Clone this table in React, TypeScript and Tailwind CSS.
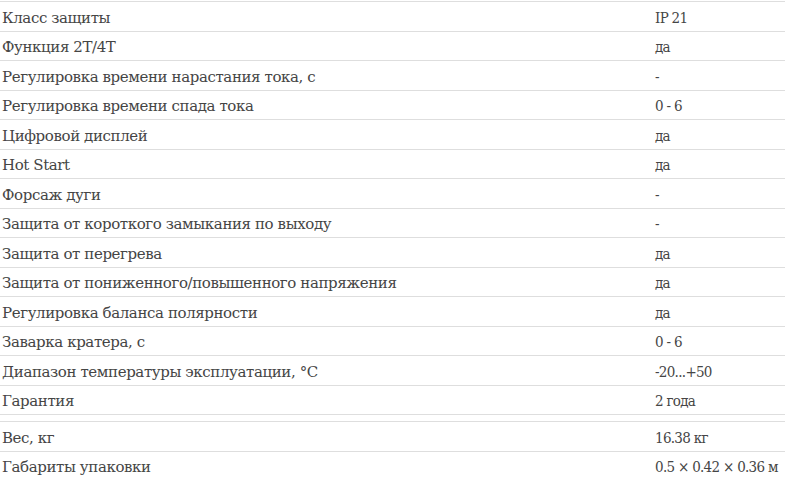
const rows: [string, string][] = [
  ["Класс защиты", "IP 21"],
  ["Функция 2T/4T", "да"],
  ["Регулировка времени нарастания тока, с", "-"],
  ["Регулировка времени спада тока", "0 - 6"],
  ["Цифровой дисплей", "да"],
  ["Hot Start", "да"],
  ["Форсаж дуги", "-"],
  ["Защита от короткого замыкания по выходу", "-"],
  ["Защита от перегрева", "да"],
  ["Защита от пониженного/повышенного напряжения", "да"],
  ["Регулировка баланса полярности", "да"],
  ["Заварка кратера, с", "0 - 6"],
  ["Диапазон температуры эксплуатации, °C", "-20...+50"],
  ["Гарантия", "2 года"],
];

const extra: [string, string][] = [
  ["Вес, кг", "16.38 кг"],
  ["Габариты упаковки", "0.5 × 0.42 × 0.36 м"],
];

const Row = ({ label, value }: { label: string; value: string }) => (
  <div className="grid grid-cols-[653px_1fr] h-[29.5px] items-center border-t border-[#dedede] pl-[2px] pt-[3px] whitespace-nowrap">
    <span>{label}</span>
    <span
      className="tracking-[-0.7px]"
      style={{ fontFamily: '"DejaVu Serif Condensed", "DejaVu Serif", serif', fontStretch: "condensed" }}
    >
      {value}
    </span>
  </div>
);

export default function App() {
  return (
    <div
      className="w-[785px] h-[480px] overflow-hidden bg-white pt-px text-[15px] leading-5 text-[#454545] tracking-[-0.4px]"
      style={{ fontFamily: '"DejaVu Serif", "Liberation Serif", serif' }}
    >
      {/* main specs */}
      <div className="border-b border-[#dedede]">
        {rows.map(([label, value], i) => (
          <Row key={i} label={label} value={value} />
        ))}
      </div>

      {/* weight & packaging */}
      <div className="mt-[6px]">
        {extra.map(([label, value], i) => (
          <Row key={i} label={label} value={value} />
        ))}
      </div>
    </div>
  );
}
